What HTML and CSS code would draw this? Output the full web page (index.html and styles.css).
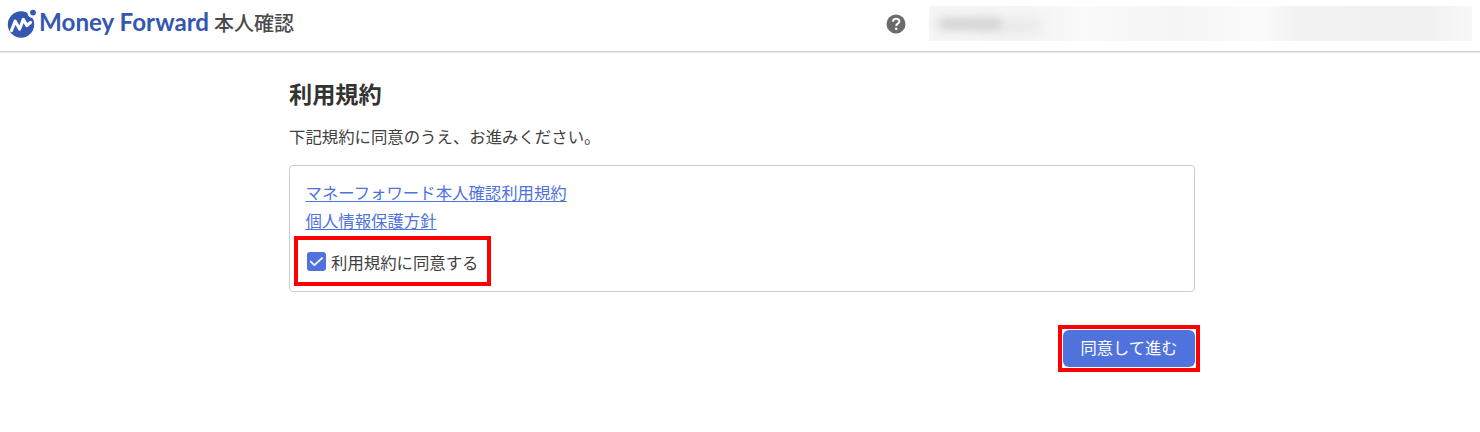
FILE: index.html
```html
<!DOCTYPE html>
<html lang="ja">
<head>
<meta charset="utf-8">
<title>本人確認</title>
<link rel="stylesheet" href="styles.css">
</head>
<body>
<header class="header">
  <div class="brand">
    <svg class="logo-mark" width="32" height="30" viewBox="0 0 32 30" aria-hidden="true">
      <circle cx="14" cy="16.5" r="13.2" fill="#3458b0"/>
      <circle cx="25.5" cy="5" r="5" fill="#fff"/>
      <circle cx="26" cy="4.6" r="2.9" fill="#3458b0"/>
      <path d="M4.5 22.5 L8.2 13.2 L12.6 21 L16.4 11.4 L19.8 17.6 L23.5 14.5" fill="none" stroke="#fff" stroke-width="3.2" stroke-linejoin="round" stroke-linecap="round"/>
    </svg>
    <span class="wordmark">Money Forward</span>
    <span class="product">本人確認</span>
  </div>
  <div class="tools">
    <svg class="help" width="20" height="20" viewBox="0 0 20 20" aria-label="ヘルプ">
      <circle cx="10" cy="10" r="9.5" fill="#6b6b6b"/>
      <path d="M6.9 7.6 C7 5.6 8.4 4.7 10.1 4.7 C12 4.7 13.3 5.8 13.3 7.4 C13.3 9.6 10.2 9.7 10.2 12" fill="none" stroke="#fff" stroke-width="2"/>
      <circle cx="10.2" cy="14.8" r="1.3" fill="#fff"/>
    </svg>
    <div class="account"><span class="smudge"></span></div>
  </div>
</header>
<main class="main">
  <h1 class="title">利用規約</h1>
  <p class="lead">下記規約に同意のうえ、お進みください。</p>
  <section class="terms">
    <a class="link" href="#">マネーフォワード本人確認利用規約</a>
    <a class="link" href="#">個人情報保護方針</a>
    <label class="agree">
      <span class="check">
        <svg width="19" height="19" viewBox="0 0 19 19" aria-hidden="true"><path d="M3.2 9.2 L7.4 13.2 L15.6 5.6" fill="none" stroke="#fff" stroke-width="1.7"/></svg>
      </span>
      <span class="agree-text">利用規約に同意する</span>
    </label>
  </section>
  <div class="actions">
    <div class="mark"><button class="primary" type="button">同意して進む</button></div>
  </div>
</main>
</body>
</html>
```
FILE: styles.css
```css
* { box-sizing: border-box; }
html, body { margin: 0; padding: 0; }
body {
  height: 432px;
  overflow: hidden;
  background: #fff;
  color: #404040;
  font-family: "Noto Sans CJK JP", "Noto Sans", sans-serif;
  font-size: 16.4px;
}
.header {
  height: 52px;
  display: flex;
  align-items: center;
  justify-content: space-between;
  border-bottom: 1px solid #cfcfcf;
  box-shadow: 0 1px 0 #ececec;
}
.brand { display: flex; align-items: center; margin-left: 7px; }
.logo-mark { display: block; margin-top: -6px; }
.wordmark {
  margin-left: 0;
  margin-top: -7px;
  font-family: Lato, sans-serif;
  font-weight: 700;
  font-size: 24.2px;
  line-height: 30px;
  color: #3458b0;
  white-space: nowrap;
}
.product {
  margin-left: 5px;
  margin-top: -7px;
  font-size: 20px;
  font-weight: 500;
  color: #4a4a4a;
}
.tools { display: flex; align-items: center; margin-right: 8px; }
.help { display: block; margin-right: 23px; margin-top: -3px; }
.account {
  width: 543px;
  height: 35px;
  margin-top: -5px;
  overflow: hidden;
  background: linear-gradient(90deg, #f5f5f5 0, #f6f6f6 22%, #fafafa 28%, #f5f5f5 45%, #fbfbfb 61%, #f2f2f2 68%, #f1f1f1 92%, #f8f8f8 100%);
}
.smudge {
  display: block;
  width: 62px;
  height: 12px;
  margin: 12px 0 0 10px;
  background: #d2d2d2;
  box-shadow: 40px 2px 10px #e6e6e6;
  filter: blur(5px);
}
.main { width: 906px; margin-left: 289px; }
.title {
  margin: 24px 0 0;
  font-size: 23.2px;
  line-height: 34px;
  font-weight: 700;
  color: #333;
}
.lead { margin: 14px 0 0; line-height: 24px; }
.terms {
  margin-top: 17px;
  height: 127px;
  padding: 12px 0 0 15.5px;
  border: 1px solid #cccccc;
  border-radius: 4px;
  display: flex;
  flex-direction: column;
  align-items: flex-start;
}
.link {
  color: #4f72dc;
  line-height: 28px;
  text-decoration: underline;
  text-underline-offset: 2px;
  text-decoration-thickness: 1px;
}
.agree {
  margin: 2px 0 0 -11.5px;
  width: 197px;
  height: 50px;
  border: 4px solid #ff0000;
  padding-left: 9px;
  display: flex;
  align-items: center;
  gap: 5px;
  white-space: nowrap;
}
.agree-text { line-height: 24px; padding-top: 1px; }
.check {
  width: 19px;
  height: 19px;
  border-radius: 3px;
  background: #4f72dc;
  display: flex;
  align-items: center;
  justify-content: center;
}
.check svg { display: block; }
.actions { display: flex; justify-content: flex-end; margin: 33px -5px 0 0; }
.mark {
  width: 142px;
  height: 47px;
  border: 4px solid #ff0000;
  padding: 1px;
}
.primary {
  display: block;
  width: 132px;
  height: 37px;
  padding: 0 0 4px;
  border: 0;
  border-radius: 6px;
  background: #4f72dc;
  color: #fff;
  font: inherit;
  font-size: 16.3px;
}
```
